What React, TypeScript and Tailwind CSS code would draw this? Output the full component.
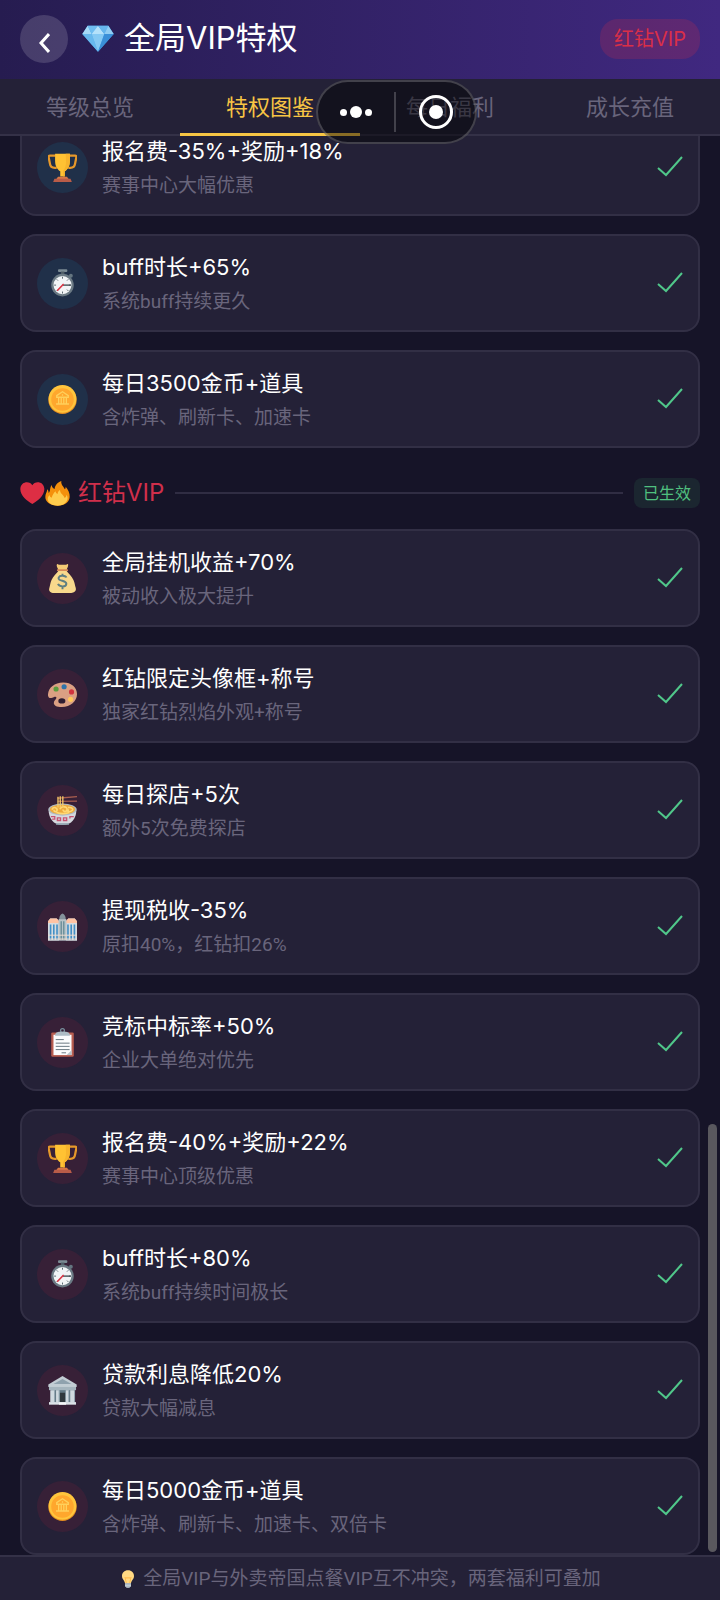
import { useState } from 'react';
import type { ComponentType } from 'react';

type IconProps = { className?: string };

function TrophyIcon({ className }: IconProps) {
  return (
    <svg viewBox="0 0 90 90" className={className} aria-hidden="true">
      <path d="M24 8H6C3 8 2 10 2 13l4 20c1 8 7 13 15 13h6M66 8h18c3 0 4 2 4 5l-4 20c-1 8-7 13-15 13h-6" fill="none" stroke="#e6982a" strokeWidth="7" />
      <path d="M22 2h46v22c0 18-8 28-16 33v16H38V57C30 52 22 42 22 24z" fill="#ffc233" />
      <path d="M55 2h13v22c0 18-8 28-16 33v16h-5V55c6-7 9-17 9-28z" fill="#f7b42d" />
      <path d="M31 74h28l5 7H26z" fill="#d97745" />
      <path d="M20 80h50l4 10H16z" fill="#b95c48" />
    </svg>
  );
}

function StopwatchIcon({ className }: IconProps) {
  return (
    <svg viewBox="0 0 90 90" className={className} aria-hidden="true">
      <rect x="31" y="1" width="29" height="8" rx="3" fill="#7b8b94" />
      <rect x="40" y="8" width="11" height="9" fill="#4e5c66" />
      <circle cx="71" cy="21" r="6" fill="#647580" />
      <circle cx="45" cy="50" r="35" fill="#6b7a84" />
      <circle cx="45" cy="50" r="28" fill="#f1f4f6" />
      <path d="M45 24v6M45 70v6M19 50h6M65 50h6M27 32l4 4M63 32l-4 4M63 68l-4-4M27 68l4-4" stroke="#56636c" strokeWidth="3" />
      <path d="M45 50h26" stroke="#37434a" strokeWidth="4" />
      <path d="M47 48L30 66" stroke="#dc3545" strokeWidth="5" strokeLinecap="round" />
    </svg>
  );
}

function CoinIcon({ className }: IconProps) {
  return (
    <svg viewBox="0 0 90 90" className={className} aria-hidden="true">
      <circle cx="45" cy="46" r="44" fill="#e58e20" />
      <circle cx="45" cy="43" r="43" fill="#ffc53d" />
      <circle cx="45" cy="45" r="35" fill="#ffa72d" />
      <path d="M27 33l18-12 18 12v5H27zM33 39v18M41 39v18M49 39v18M57 39v18M25 59h40M43 31h4" fill="none" stroke="#ffd05b" strokeWidth="4" />
    </svg>
  );
}

function MoneyBagIcon({ className }: IconProps) {
  return (
    <svg viewBox="0 0 90 90" className={className} aria-hidden="true">
      <path d="M30 0c5 4 8 2 15 2s10 2 15-2c4 0 3 5 1 10l-5 12H34L28 9c-2-5-1-9 2-9z" fill="#f3cb75" />
      <path d="M32 22h26c4 6 16 16 21 28 4 8 4 15 7 24 3 10-5 16-14 16H18C9 90 1 84 4 75c3-9 3-17 7-25 5-12 17-22 21-28z" fill="#f8d98c" />
      <path d="M30 16h30c3 0 3 6 0 6H30c-3 0-3-6 0-6z" fill="#d88b58" />
      <path d="M57 42c-2-6-20-9-24 0-4 12 24 8 24 19 0 11-22 11-26 1M45 30v7M45 69v9" fill="none" stroke="#5f7f82" strokeWidth="6" />
    </svg>
  );
}

function PaletteIcon({ className }: IconProps) {
  return (
    <svg viewBox="0 0 90 90" className={className} aria-hidden="true">
      <path d="M47 8c26 0 43 15 43 36S70 84 43 84c-17 0-25-6-25-13 0-8 9-11 8-17-1-4-6-2-13 1-8 3-14-1-13-11C2 24 20 8 47 8z" fill="#dba083" />
      <ellipse cx="43" cy="65" rx="11" ry="8" fill="#2f1e31" />
      <circle cx="25" cy="28" r="8" fill="#5b9d3e" />
      <circle cx="50" cy="21" r="8" fill="#3074aa" />
      <circle cx="73" cy="37" r="8" fill="#d1333e" />
      <circle cx="70" cy="60" r="8" fill="#ffc65a" />
    </svg>
  );
}

function NoodlesIcon({ className }: IconProps) {
  return (
    <svg viewBox="0 0 90 90" className={className} aria-hidden="true">
      <path d="M2 44c0 24 14 46 43 46s43-22 43-46z" fill="#d5d8df" />
      <ellipse cx="45" cy="42" rx="44" ry="19" fill="#aebac2" />
      <ellipse cx="45" cy="42" rx="39" ry="15" fill="#eda93c" />
      <path d="M12 42c6-12 18-4 16 3s-13 2-8-2M37 41c5-11 24-9 22 1s-16 5-11 0M62 36c13-2 20 6 10 11s-14-2-7-4M26 51c14 5 29 4 40 0" fill="none" stroke="#ffd873" strokeWidth="5" />
      <path d="M30 7l60-5M30 17l60-1" stroke="#a95e50" strokeWidth="4" />
      <path d="M31 2v34M38 1v35M46 1v34" stroke="#f6cc69" strokeWidth="4" />
      <path d="M9 64h12v8h-8M29 68v8h10v-8zM48 68v8h10v-8zM68 70v-6h12" fill="none" stroke="#c75170" strokeWidth="4" />
      <path d="M25 87h40" stroke="#8ca0ac" strokeWidth="5" />
    </svg>
  );
}

function TowersIcon({ className }: IconProps) {
  return (
    <svg viewBox="0 0 90 90" className={className} aria-hidden="true">
      <path d="M0 29l7-9h20l7 8v61H0zM56 28l7-8h20l7 9v60H56z" fill="#d5dce1" />
      <path d="M0 29l7-9h20l7 8v6H0zM56 28l7-8h20l7 9v5H56z" fill="#ffc3a3" />
      <path d="M33 22h24v67H33z" fill="#b7c3c8" />
      <path d="M35 22c0-8 4-15 10-17 6 2 10 9 10 17z" fill="#84929b" />
      <path d="M8 39v47M18 39v47M28 39v47M62 39v47M72 39v47M82 39v47" stroke="#438fc5" strokeWidth="5" />
      <path d="M41 29v57M49 29v57" stroke="#638994" strokeWidth="4" />
      <path d="M0 72h90M0 84h90" stroke="#f1ddcf" strokeWidth="3" />
    </svg>
  );
}

function ClipboardIcon({ className }: IconProps) {
  return (
    <svg viewBox="0 0 90 90" className={className} aria-hidden="true">
      <rect x="10" y="14" width="70" height="75" rx="4" fill="#b85d50" />
      <path d="M17 21h56v63H17z" fill="#fbfcfd" />
      <path d="M73 69v15H58z" fill="#b8c4cb" />
      <circle cx="45" cy="8" r="6" fill="none" stroke="#78909c" strokeWidth="4" />
      <path d="M22 24c0-9 7-12 15-12h16c8 0 15 3 15 12z" fill="#aebdc6" />
      <path d="M24 36h25M24 47h43M24 57h43M24 67h43M42 77h14" stroke="#66757e" strokeWidth="3" />
    </svg>
  );
}

function BankIcon({ className }: IconProps) {
  return (
    <svg viewBox="0 0 90 90" className={className} aria-hidden="true">
      <path d="M10 34h70v50H10z" fill="#637985" />
      <path d="M1 26L45 0l44 26v8H1z" fill="#c2cdd4" />
      <path d="M17 25L45 9l28 16z" fill="#8fa2ae" />
      <path d="M3 34h84v10H3z" fill="#a5b5be" />
      <path d="M7 44h14v38H7zM25 44h10v38H25zM55 44h10v38H55zM69 44h14v38H69z" fill="#d0d9df" />
      <path d="M19 44h3v38h-3zM33 44h3v38h-3zM63 44h3v38h-3zM81 44h3v38h-3z" fill="#91a5b1" />
      <path d="M37 52h16v30H37z" fill="#30383d" />
      <path d="M3 81h84v8H3z" fill="#dce3e8" />
      <path d="M34 82h22v7H34z" fill="#f5f7f8" />
    </svg>
  );
}

function DiamondIcon({ className }: IconProps) {
  return (
    <svg viewBox="0 0 96 96" className={className} aria-hidden="true">
      <path d="M17 8h62l16 25-47 53L1 33z" fill="#43a1ea" />
      <path d="M17 8L1 33h28z" fill="#a6daf7" />
      <path d="M17 8h31L29 33z" fill="#6fbdf0" />
      <path d="M48 8L29 33h38z" fill="#b4e1fa" />
      <path d="M48 8h31L67 33z" fill="#66b5ec" />
      <path d="M79 8l16 25H67z" fill="#91cdf3" />
      <path d="M1 33h28l19 53z" fill="#67b8ed" />
      <path d="M29 33h38L48 86z" fill="#85c9f3" />
      <path d="M67 33h28L48 86z" fill="#3a8fd8" />
    </svg>
  );
}

function HeartIcon({ className }: IconProps) {
  return (
    <svg viewBox="0 0 75 75" className={className} aria-hidden="true">
      <path d="M37 13C30-1 3 0 1 23c-1 20 20 36 36 46 16-10 37-26 36-46C71 0 44-1 37 13z" fill="#dd2e44" />
    </svg>
  );
}

function FireIcon({ className }: IconProps) {
  return (
    <svg viewBox="0 0 75 75" className={className} aria-hidden="true">
      <path d="M49 0c-2 12 8 17 10 25 3-2 3-5 3-8 7 8 13 20 12 31-1 15-15 26-36 26S1 64 1 48c0-9 5-15 6-23 3 3 4 7 4 11 6-6 3-17 9-24 1 8 5 11 9 12C29 14 39 3 49 0z" fill="#f4900c" />
      <path d="M45 27c0 11 13 16 13 23 5-1 6-4 6-9 5 6 5 13 1 20-4 8-14 13-27 13S13 69 10 61c-4-8-1-15 4-19 0 4 2 7 6 8 3-7 5-14 12-19 0 5 2 7 6 8 0-5 2-9 7-12z" fill="#ffcc4d" />
    </svg>
  );
}

function BulbIcon({ className }: IconProps) {
  return (
    <svg viewBox="0 0 54 54" className={className} aria-hidden="true">
      <path d="M27 1c11 0 18 8 18 17 0 10-8 13-9 22H18c-1-9-9-12-9-22C9 9 16 1 27 1z" fill="#ffd983" />
      <path d="M22 39l-4-17c2 4 5 4 6 0 1 4 5 4 6 0 1 4 4 4 6 0l-4 17" fill="none" stroke="#ffac33" strokeWidth="2" />
      <path d="M18 40h18v9l-5 4h-8l-5-4z" fill="#ccd6dd" />
      <path d="M18 44h18M19 49h16" stroke="#99aab5" strokeWidth="2" />
    </svg>
  );
}

function CheckIcon() {
  return (
    <svg viewBox="0 0 26 22" className="mb-0.5 w-[26px] shrink-0" role="img" aria-label="已生效">
      <path d="M1 13l8 7L25 2" fill="none" stroke="#50c78a" strokeWidth="2" />
    </svg>
  );
}

type Perk = { icon: ComponentType<IconProps>; title: string; desc: string };

const bluePerks: Perk[] = [
  { icon: TrophyIcon, title: '报名费-35%+奖励+18%', desc: '赛事中心大幅优惠' },
  { icon: StopwatchIcon, title: 'buff时长+65%', desc: '系统buff持续更久' },
  { icon: CoinIcon, title: '每日3500金币+道具', desc: '含炸弹、刷新卡、加速卡' },
];

const redPerks: Perk[] = [
  { icon: MoneyBagIcon, title: '全局挂机收益+70%', desc: '被动收入极大提升' },
  { icon: PaletteIcon, title: '红钻限定头像框+称号', desc: '独家红钻烈焰外观+称号' },
  { icon: NoodlesIcon, title: '每日探店+5次', desc: '额外5次免费探店' },
  { icon: TowersIcon, title: '提现税收-35%', desc: '原扣40%，红钻扣26%' },
  { icon: ClipboardIcon, title: '竞标中标率+50%', desc: '企业大单绝对优先' },
  { icon: TrophyIcon, title: '报名费-40%+奖励+22%', desc: '赛事中心顶级优惠' },
  { icon: StopwatchIcon, title: 'buff时长+80%', desc: '系统buff持续时间极长' },
  { icon: BankIcon, title: '贷款利息降低20%', desc: '贷款大幅减息' },
  { icon: CoinIcon, title: '每日5000金币+道具', desc: '含炸弹、刷新卡、加速卡、双倍卡' },
];

const tabs = ['等级总览', '特权图鉴', '每日福利', '成长充值'];

function PerkList({ perks, circle }: { perks: Perk[]; circle: string }) {
  return (
    <ul className="flex flex-col gap-[18px]">
      {perks.map(({ icon: Icon, title, desc }) => (
        <li key={title} className="flex items-center gap-3.5 rounded-2xl border-2 border-[#322f45] bg-[#242137] px-[15px] py-3.5">
          <span className={`flex size-[51px] shrink-0 items-center justify-center rounded-full ${circle}`}>
            <Icon className="size-[29px]" />
          </span>
          <div className="min-w-0 flex-1">
            <h3 className="text-[22px] leading-[34px] text-white">{title}</h3>
            <p className="mt-1 font-['Roboto','Noto_Sans_CJK_SC',sans-serif] text-[19px] leading-7 text-[#69657c]">{desc}</p>
          </div>
          <CheckIcon />
        </li>
      ))}
    </ul>
  );
}

export default function App() {
  const [active, setActive] = useState(1);

  return (
    <div className="relative flex h-screen flex-col overflow-hidden bg-[#161428] font-['Inter','Noto_Sans_CJK_SC',sans-serif]">
      <header className="flex shrink-0 items-center bg-linear-to-r from-[#261c50] to-[#402880] px-5 pt-[15px] pb-4">
        <button type="button" aria-label="返回" className="flex size-12 items-center justify-center rounded-full bg-white/15">
          <svg viewBox="0 0 12 20" className="mt-2 w-3" aria-hidden="true">
            <path d="M11 1L3 10l8 9" fill="none" stroke="#fff" strokeWidth="3" />
          </svg>
        </button>
        <DiamondIcon className="ml-3.5 size-8" />
        <h1 className="ml-2.5 flex-1 pb-0.5 text-[31px] leading-[46px] text-white">全局VIP特权</h1>
        <span className="rounded-[18px] bg-[#dd2e44]/20 px-3.5 py-1.5 text-xl leading-7 text-[#d92f48]">红钻VIP</span>
      </header>

      <nav className="grid shrink-0 grid-cols-4 border-b-2 border-[#343147] bg-[#242137]">
        {tabs.map((tab, i) => (
          <button
            key={tab}
            type="button"
            onClick={() => setActive(i)}
            className={`-mb-0.5 border-b-3 pt-2.5 pb-2 text-[22px] leading-9 ${
              i === active ? 'border-[#f7c544] text-[#f7c544]' : 'border-transparent text-[#69657c]'
            }`}
          >
            {tab}
          </button>
        ))}
      </nav>

      {/* column-reverse keeps the list scrolled to its end */}
      <main className="flex min-h-0 flex-1 flex-col-reverse overflow-y-auto [scrollbar-width:none]">
        <div className="px-5">
          <PerkList perks={bluePerks} circle="bg-[#203049]" />
          <div className="flex items-center pt-[30px] pb-[21px]">
            <HeartIcon className="size-[25px]" />
            <FireIcon className="size-[25px]" />
            <h2 className="ml-2 text-2xl leading-[30px] text-[#d02f4b]">红钻VIP</h2>
            <span className="mx-[11px] h-0.5 flex-1 bg-[#302d43]" />
            <span className="rounded-lg bg-[#1b2630] px-[9px] text-base leading-[30px] text-[#50c07f]">已生效</span>
          </div>
          <PerkList perks={redPerks} circle="bg-[#372037]" />
        </div>
      </main>

      <footer className="flex shrink-0 items-center justify-center gap-1.5 border-t-2 border-[#343147] bg-[#242137] pt-2 pb-[7px] font-['Roboto','Noto_Sans_CJK_SC',sans-serif] text-[19px] leading-7 text-[#69657c]">
        <BulbIcon className="size-[18px]" />
        <p>全局VIP与外卖帝国点餐VIP互不冲突，两套福利可叠加</p>
      </footer>

      <div className="absolute right-[3px] bottom-12 h-[428px] w-[9px] rounded-full bg-[#59585e]" />

      {/* mini-program capsule */}
      <div className="absolute top-20 left-[316px] flex h-16 w-[161px] items-center rounded-full border-2 border-white/20 bg-black/45">
        <button type="button" aria-label="更多" className="flex w-[76px] items-center justify-center gap-[3px]">
          <span className="size-[7px] rounded-full bg-white" />
          <span className="size-3 rounded-full bg-white" />
          <span className="size-[7px] rounded-full bg-white" />
        </button>
        <span className="h-10 w-0.5 bg-white/20" />
        <button type="button" aria-label="关闭" className="flex flex-1 items-center justify-center">
          <span className="flex size-[34px] items-center justify-center rounded-full border-3 border-white">
            <span className="size-[14px] rounded-full bg-white" />
          </span>
        </button>
      </div>
    </div>
  );
}
